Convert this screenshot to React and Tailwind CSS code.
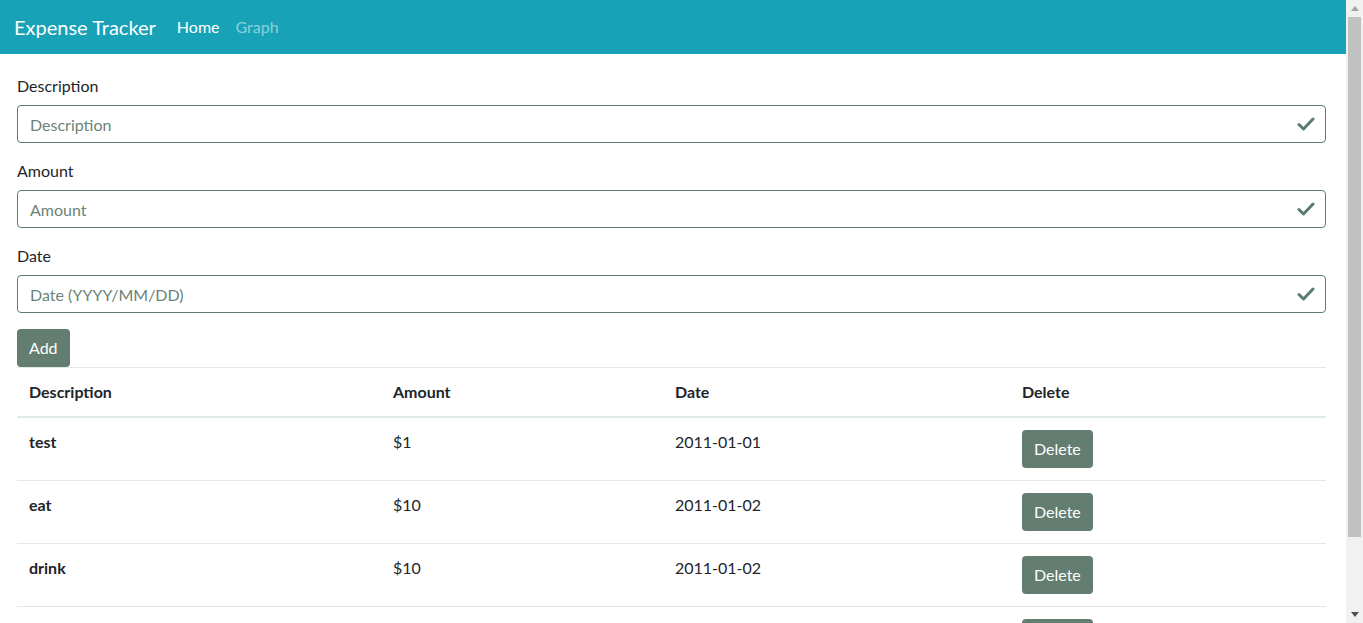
import { useState } from "react";

const rows = [
    { description: "test", amount: 1, date: "2011-01-01" },
    { description: "eat", amount: 10, date: "2011-01-02" },
    { description: "drink", amount: 10, date: "2011-01-02" },
    { description: "movie", amount: 15, date: "2011-01-03" },
];

const Check = () => (
    <svg width="18" height="14" viewBox="0 0 18 14" className="absolute right-[11px] top-1/2 -translate-y-1/2">
        <path d="M2 7.5 L6.5 12 L16 2" fill="none" stroke="#5a7d6e" strokeWidth="3" strokeLinecap="round" strokeLinejoin="round" />
    </svg>
);

const Field = ({ label, placeholder, value, onChange }) => (
    <div className="mb-4">
        <label className="block mb-[7px] text-[16px] leading-6 text-[#212529]">{label}</label>
        <div className="relative">
            <input
                type="text"
                value={value}
                onChange={onChange}
                placeholder={placeholder}
                className="w-full h-[38px] px-3 border border-[#5a7d6e] rounded-[4px] text-[16px] text-[#495057] placeholder:text-[#6b8378] focus:outline-none"
            />
            <Check />
        </div>
    </div>
);

// fake browser scrollbar, the page is longer than the window
const Scrollbar = () => (
    <div className="w-[17px] h-full flex flex-col bg-[#f1f1f1] shrink-0">
        <div className="h-[17px] flex items-center justify-center">
            <svg width="8" height="5" viewBox="0 0 8 5"><path d="M0 5 L4 0 L8 5 Z" fill="#a3a3a3" /></svg>
        </div>
        <div className="h-[520px] mx-[2px] bg-[#c1c1c1]" />
        <div className="flex-1" />
        <div className="h-[17px] flex items-center justify-center">
            <svg width="8" height="5" viewBox="0 0 8 5"><path d="M0 0 L8 0 L4 5 Z" fill="#505050" /></svg>
        </div>
    </div>
);

export default function App() {
    const [expenses, setExpenses] = useState(rows);
    const [description, setDescription] = useState("");
    const [amount, setAmount] = useState("");
    const [date, setDate] = useState("");

    const addHandler = () => {
        if (!description || !amount || !date) return;
        setExpenses([...expenses, { description, amount: Number(amount), date }]);
        setDescription("");
        setAmount("");
        setDate("");
    };

    return (
        <div className="h-screen flex overflow-hidden bg-white text-[#212529]" style={{ fontFamily: "Lato, 'Open Sans', sans-serif" }}>
            <div className="flex-1 min-w-0 overflow-hidden">
                {/* Navbar */}
                <nav className="h-[54px] bg-[#17a2b8] flex items-center px-[14px]">
                    <span className="text-[20px] text-white mr-[21px]">Expense Tracker</span>
                    <a className="text-[16px] text-white mr-[16px]">Home</a>
                    <a className="text-[16px] text-white/50">Graph</a>
                </nav>

                <div className="pl-[17px] pr-[20px] pt-[20px] pb-10">
                    <Field label="Description" placeholder="Description" value={description} onChange={(e) => setDescription(e.target.value)} />
                    <Field label="Amount" placeholder="Amount" value={amount} onChange={(e) => setAmount(e.target.value)} />
                    <Field label="Date" placeholder="Date (YYYY/MM/DD)" value={date} onChange={(e) => setDate(e.target.value)} />

                    <button onClick={addHandler} className="h-[38px] px-3 bg-[#637d70] text-white text-[16px] rounded-[4px]">
                        Add
                    </button>

                    {/* Table */}
                    <table className="w-full border-collapse text-[16px] leading-6">
                        <thead>
                            <tr className="border-t border-[#e0ebe7] border-b-2">
                                <th className="w-[364px] p-3 text-left font-bold">Description</th>
                                <th className="w-[282px] p-3 text-left font-bold">Amount</th>
                                <th className="w-[347px] p-3 text-left font-bold">Date</th>
                                <th className="p-3 text-left font-bold">Delete</th>
                            </tr>
                        </thead>
                        <tbody>
                            {expenses.map((exp, idx) => (
                                <tr key={idx} className="border-t border-[#e0ebe7] align-top">
                                    <td className="p-3 font-bold">{exp.description}</td>
                                    <td className="p-3">${exp.amount}</td>
                                    <td className="p-3">{exp.date}</td>
                                    <td className="p-3">
                                        <button
                                            onClick={() => setExpenses(expenses.filter((_, i) => i !== idx))}
                                            className="h-[38px] px-3 bg-[#637d70] text-white text-[16px] rounded-[4px]"
                                        >
                                            Delete
                                        </button>
                                    </td>
                                </tr>
                            ))}
                        </tbody>
                    </table>
                </div>
            </div>
            <Scrollbar />
        </div>
    );
}
